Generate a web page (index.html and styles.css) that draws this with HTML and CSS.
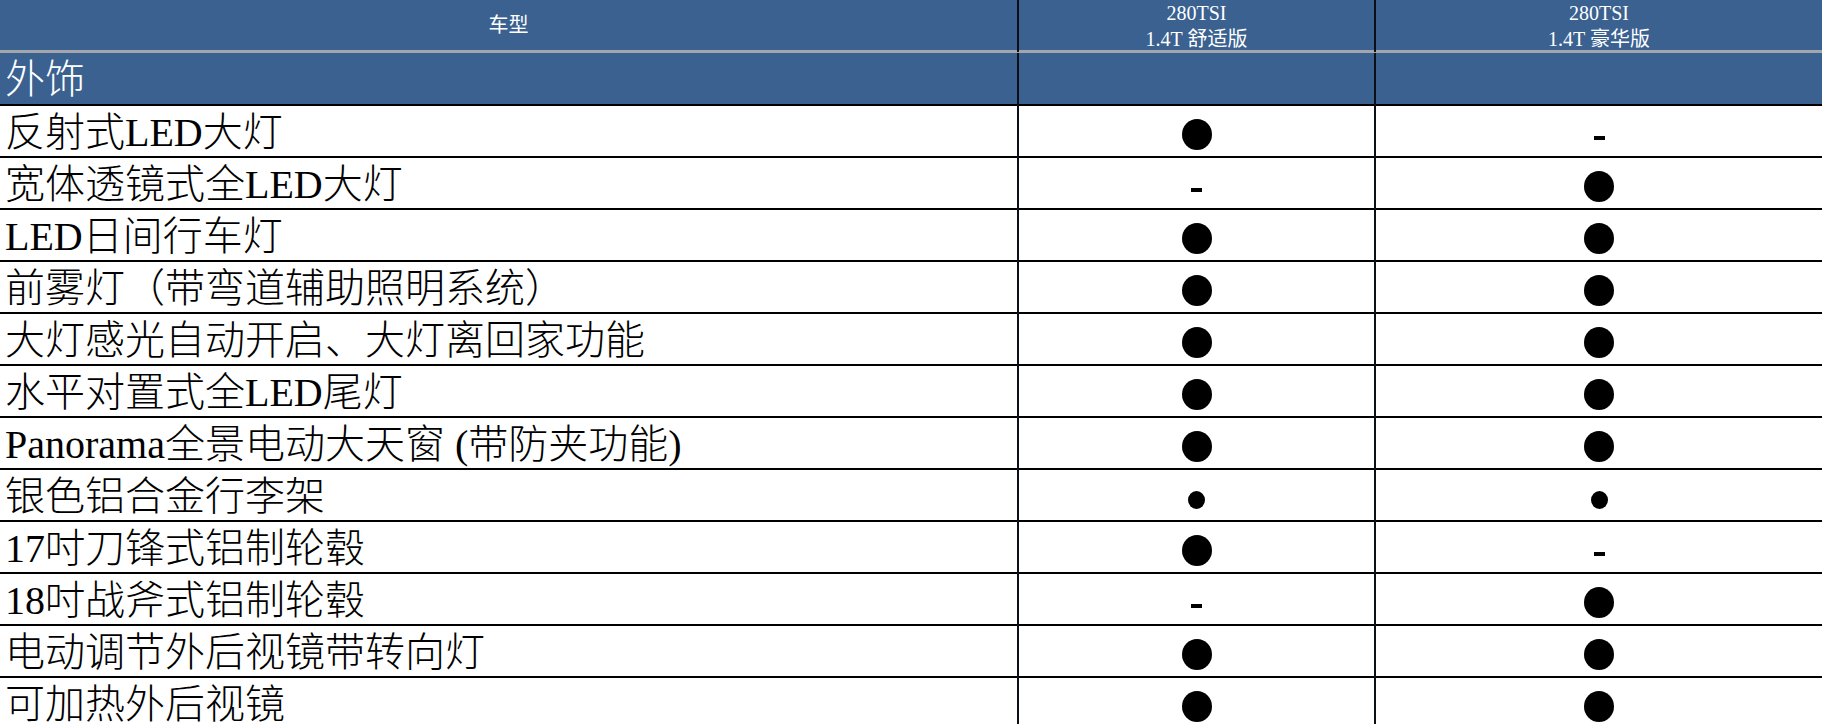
FILE: index.html
```html
<!DOCTYPE html>
<html lang="zh-CN">
<head>
<meta charset="utf-8">
<title>外饰配置</title>
<link rel="stylesheet" href="styles.css">
</head>
<body>
<div class="table">
  <div class="row head">
    <div class="cell">车型</div>
    <div class="cell two">280TSI<br>1.4T 舒适版</div>
    <div class="cell two">280TSI<br>1.4T 豪华版</div>
  </div>
  <div class="row section">
    <div class="cell label">外饰</div>
    <div class="cell"></div>
    <div class="cell"></div>
  </div>
  <div class="row">
    <div class="cell label">反射式LED大灯</div>
    <div class="cell mark"><span class="dot"></span></div>
    <div class="cell mark"><span class="dash"></span></div>
  </div>
  <div class="row">
    <div class="cell label">宽体透镜式全LED大灯</div>
    <div class="cell mark"><span class="dash"></span></div>
    <div class="cell mark"><span class="dot"></span></div>
  </div>
  <div class="row">
    <div class="cell label">LED日间行车灯</div>
    <div class="cell mark"><span class="dot"></span></div>
    <div class="cell mark"><span class="dot"></span></div>
  </div>
  <div class="row">
    <div class="cell label">前雾灯（带弯道辅助照明系统）</div>
    <div class="cell mark"><span class="dot"></span></div>
    <div class="cell mark"><span class="dot"></span></div>
  </div>
  <div class="row">
    <div class="cell label">大灯感光自动开启、大灯离回家功能</div>
    <div class="cell mark"><span class="dot"></span></div>
    <div class="cell mark"><span class="dot"></span></div>
  </div>
  <div class="row">
    <div class="cell label">水平对置式全LED尾灯</div>
    <div class="cell mark"><span class="dot"></span></div>
    <div class="cell mark"><span class="dot"></span></div>
  </div>
  <div class="row">
    <div class="cell label">Panorama全景电动大天窗 (带防夹功能)</div>
    <div class="cell mark"><span class="dot"></span></div>
    <div class="cell mark"><span class="dot"></span></div>
  </div>
  <div class="row">
    <div class="cell label">银色铝合金行李架</div>
    <div class="cell mark"><span class="dot small"></span></div>
    <div class="cell mark"><span class="dot small"></span></div>
  </div>
  <div class="row">
    <div class="cell label">17吋刀锋式铝制轮毂</div>
    <div class="cell mark"><span class="dot"></span></div>
    <div class="cell mark"><span class="dash"></span></div>
  </div>
  <div class="row">
    <div class="cell label">18吋战斧式铝制轮毂</div>
    <div class="cell mark"><span class="dash"></span></div>
    <div class="cell mark"><span class="dot"></span></div>
  </div>
  <div class="row">
    <div class="cell label">电动调节外后视镜带转向灯</div>
    <div class="cell mark"><span class="dot"></span></div>
    <div class="cell mark"><span class="dot"></span></div>
  </div>
  <div class="row">
    <div class="cell label">可加热外后视镜</div>
    <div class="cell mark"><span class="dot"></span></div>
    <div class="cell mark"><span class="dot"></span></div>
  </div>
</div>
</body>
</html>
```

FILE: styles.css
```css
* {
  box-sizing: border-box;
}

body {
  margin: 0;
  background: #ffffff;
}

.table {
  width: 1822px;
  font-family: "Liberation Serif", "Noto Sans CJK SC", serif;
  color: #000;
}

.row {
  display: grid;
  grid-template-columns: 1017px 357px 448px;
  height: 52px;
  border-bottom: 2px solid #000;
}

.cell {
  min-width: 0;
  overflow: visible;
  white-space: nowrap;
}

.cell + .cell {
  border-left: 2px solid #0a0f18;
}

.head {
  height: 53px;
  background: #3a6190;
  border-bottom: 3px solid #a3a6aa;
  color: #ffffff;
  font-size: 20px;
  text-align: center;
}

.head .cell {
  line-height: 50px;
}

.head .cell.two {
  line-height: 26px;
}

.section {
  height: 53px;
  background: #3a6190;
  color: #ffffff;
}

.label {
  font-size: 40px;
  font-weight: 300;
  line-height: 54px;
  padding-left: 5px;
}

.section .label {
  line-height: 54px;
}

.mark {
  display: flex;
  align-items: center;
  justify-content: center;
}

.dot {
  display: block;
  width: 30px;
  height: 31px;
  border-radius: 50%;
  background: #000;
  margin-top: 2px;
}

.dot.small {
  width: 17px;
  height: 18px;
  margin-top: 6px;
}

.dash {
  display: block;
  width: 11px;
  height: 4px;
  background: #000;
  margin-top: 10px;
}
```
